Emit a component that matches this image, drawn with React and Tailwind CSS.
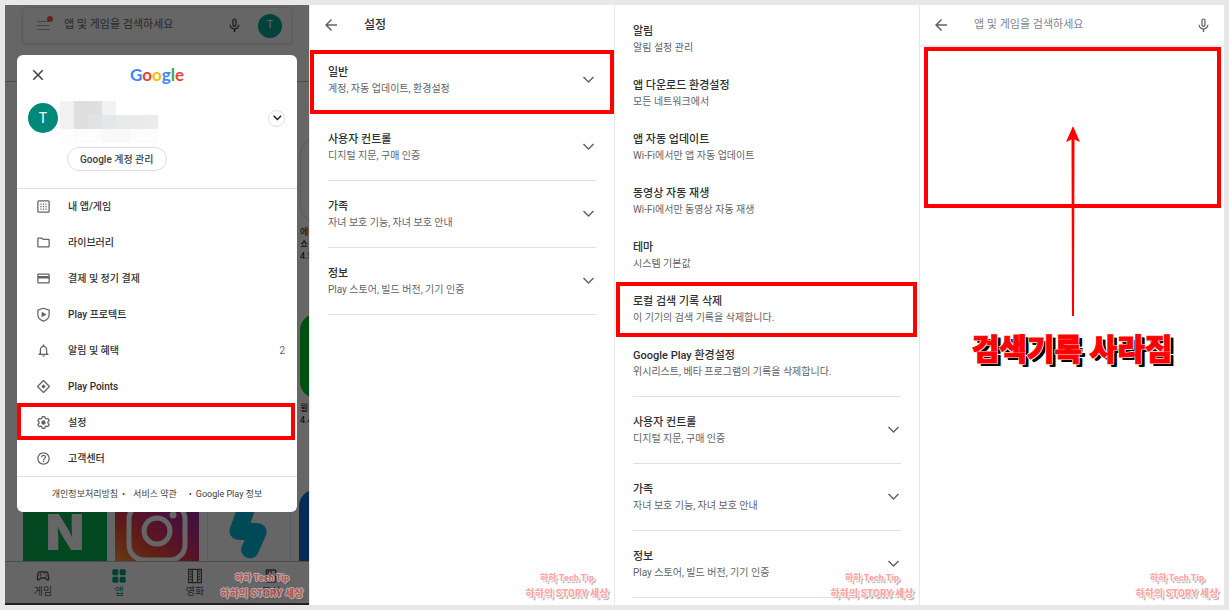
import {
  MdArrowBack, MdClose, MdHelpOutline, MdMicNone, MdNotificationsNone,
  MdOutlineBook, MdOutlineCreditCard, MdOutlineFolder, MdOutlineSportsEsports
} from 'react-icons/md';

function AppsIcon({ className }) {
  return (
    <svg viewBox="0 0 24 24" fill="none" stroke="currentColor" className={className}>
      <rect x="3" y="3" width="18" height="18" rx="1.5" strokeWidth="2" />
      <path d="M7 8h10M7 12h10M7 16h10" strokeWidth="2" strokeDasharray="2 2" />
    </svg>
  );
}

function ShieldPlayIcon({ className }) {
  return (
    <svg viewBox="0 0 24 24" fill="none" stroke="currentColor" strokeWidth="2" className={className}>
      <path d="M12 2 3 5v7c0 5 4 9 9 10.500C17 21 21 17 21 12V5z" strokeLinejoin="round" />
      <path d="M9 7.500v9l8-4.500z" fill="currentColor" stroke="none" />
    </svg>
  );
}

function PointsIcon({ className }) {
  return (
    <svg viewBox="0 0 24 24" fill="none" stroke="currentColor" strokeWidth="2" className={className}>
      <path d="M12 2.500 21.500 12 12 21.500 2.500 12z" strokeLinejoin="round" />
      <path d="M12 8.500 15.500 12 12 15.500 8.500 12z" fill="currentColor" stroke="none" />
    </svg>
  );
}

function GearIcon({ className }) {
  return (
    <svg viewBox="0 0 24 24" fill="none" stroke="currentColor" strokeWidth="2" strokeLinejoin="round" className={className}>
      <path d="M10 2.500h4l.6 2.700 1.900 1.100 2.600-.8 2 3.500-2 1.900v2.200l2 1.900-2 3.500-2.600-.8-1.900 1.100-.6 2.700h-4l-.6-2.700-1.900-1.100-2.600.8-2-3.500 2-1.900v-2.200l-2-1.900 2-3.500 2.600.8 1.900-1.100z" />
      <circle cx="12" cy="12" r="3.500" fill="currentColor" stroke="none" />
    </svg>
  );
}

function FilmIcon({ className }) {
  return (
    <svg viewBox="0 0 24 24" fill="none" stroke="currentColor" strokeWidth="2" className={className}>
      <path d="M2.500 2h19v20h-19zM8 2v20M16 2v20" />
      <path d="M5.500 4v16M18.500 4v16" strokeDasharray="2 2" />
    </svg>
  );
}

function TilesIcon({ className }) {
  return (
    <svg viewBox="0 0 24 24" fill="currentColor" className={className}>
      <rect x="2" y="2" width="9" height="9" rx="2" />
      <rect x="13" y="2" width="9" height="9" rx="2" />
      <rect x="2" y="13" width="9" height="9" rx="2" />
      <rect x="13" y="13" width="9" height="9" rx="2" />
    </svg>
  );
}

function Chevron({ className }) {
  return (
    <svg viewBox="0 0 16 16" fill="none" stroke="currentColor" strokeWidth="1.5" className={className}>
      <path d="m3.500 5 5 5 5-5" />
    </svg>
  );
}

const menu = [
  { label: '내 앱/게임', Icon: AppsIcon },
  { label: '라이브러리', Icon: MdOutlineFolder },
  { label: '결제 및 정기 결제', Icon: MdOutlineCreditCard },
  { label: 'Play 프로텍트', Icon: ShieldPlayIcon },
  { label: '알림 및 혜택', Icon: MdNotificationsNone, count: 2 },
  { label: 'Play Points', Icon: PointsIcon },
  { label: '설정', Icon: GearIcon, marked: true },
  { label: '고객센터', Icon: MdHelpOutline },
];

const tabs = [
  { label: '게임', Icon: MdOutlineSportsEsports },
  { label: '앱', Icon: TilesIcon, active: true },
  { label: '영화', Icon: FilmIcon },
  { label: '도서', Icon: MdOutlineBook },
];

const sections = [
  { title: '사용자 컨트롤', desc: '디지털 지문, 구매 인증' },
  { title: '가족', desc: '자녀 보호 기능, 자녀 보호 안내' },
  { title: '정보', desc: 'Play 스토어, 빌드 버전, 기기 인증' },
];

const general = [
  { title: '알림', desc: '알림 설정 관리' },
  { title: '앱 다운로드 환경설정', desc: '모든 네트워크에서' },
  { title: '앱 자동 업데이트', desc: 'Wi-Fi에서만 앱 자동 업데이트' },
  { title: '동영상 자동 재생', desc: 'Wi-Fi에서만 동영상 자동 재생' },
  { title: '테마', desc: '시스템 기본값' },
  { title: '로컬 검색 기록 삭제', desc: '이 기기의 검색 기록을 삭제합니다.', marked: true },
];

// censored name and e-mail
const mosaic = [
  'bg-[#f1f1f1]', 'bg-[#dedede]', 'bg-[#dfdfdf]', 'bg-[#f1f2f4]', 'bg-white', 'bg-white', 'bg-white',
  'bg-[#f1f1f1]', 'bg-[#dfdfe0]', 'bg-[#e2e2e3]', 'bg-[#e4e6e7]', 'bg-[#e7eaeb]', 'bg-[#e9e9ea]', 'bg-[#ebebeb]',
  'bg-[#fdfdfd]', 'bg-[#fcfcfc]', 'bg-[#fcfcfc]', 'bg-[#f9f9f9]', 'bg-[#f9f9f9]', 'bg-[#fcfcfc]', 'bg-[#fcfcfc]',
];

function Watermark() {
  return (
    <div className="pointer-events-none absolute right-1 bottom-1 w-[86px] text-center leading-[15px] font-black whitespace-nowrap text-[#ff4d4d] opacity-50 [text-shadow:1px_0_#fff,-1px_0_#fff,0_1px_#fff,0_-1px_#fff,2px_2px_1px_#555]">
      <p className="text-[9px] leading-[15px]">하하 Tech Tip</p>
      <p className="text-[10px] leading-[15px]">하하의 STORY 세상</p>
    </div>
  );
}

function Panel({ children }) {
  return (
    <section className="relative flex flex-col overflow-hidden bg-white">
      {children}
      <Watermark />
    </section>
  );
}

function RowText({ title, desc }) {
  return (
    <span className="block text-left">
      <span className="block text-[11px] leading-[17px] font-medium text-[#2d2e31]">{title}</span>
      <span className="block text-[10px] leading-4 text-[#5f6368]">{desc}</span>
    </span>
  );
}

function SectionRow({ title, desc, marked }) {
  return (
    <li className="relative h-[67px] border-b border-[#e0e0e0]">
      <button className="flex h-full w-full items-center justify-between">
        <RowText title={title} desc={desc} />
        <Chevron className="size-4 text-[#5f6368]" />
      </button>
      {marked && <div className="absolute -inset-x-[18px] top-[3px] -bottom-px border-4 border-[#f00]" />}
    </li>
  );
}

function Tile({ className, children, name, sub, rating }) {
  return (
    <div className="w-[84px] shrink-0">
      <div className={`flex h-[84px] items-center justify-center overflow-hidden ${className}`}>{children}</div>
      {name && (
        <div className="pt-1 text-[9px] leading-3 text-black">
          <p>{name}</p>
          <p>{sub}</p>
          <p>{rating}</p>
        </div>
      )}
    </div>
  );
}

function StorePanel() {
  return (
    <Panel>
      <div className="mx-[17px] mt-[2px] flex h-[37px] items-center rounded border border-[#e8e8e8] px-[13px] shadow-sm">
        <button aria-label="메뉴" className="relative">
          <svg viewBox="0 0 16 12" stroke="#aaa" className="h-3 w-4"><path d="M1 1.500h13M1 5.500h13M1 9.500h13" /></svg>
          <span className="absolute -top-1 -right-px size-[6px] rounded-full bg-[#ff5050]" />
        </button>
        <input type="text" aria-label="앱 및 게임 검색" placeholder="앱 및 게임을 검색하세요" className="ml-3 min-w-0 flex-1 text-[11px] outline-none placeholder:text-[#666]" />
        <button aria-label="음성 검색"><MdMicNone className="size-[17px] text-[#444]" /></button>
        <span className="-mr-1 ml-[15px] flex size-6 items-center justify-center rounded-full bg-[#00a892] text-[11px] text-white">T</span>
      </div>
      <div className="mt-[37px] border-b border-[#bbb]" />

      {/* App tiles */}
      <div className="min-h-0 flex-1 basis-0 overflow-hidden pt-14">
        <div className="-mr-[75px] flex h-44 justify-end">
          <Tile className="rounded-2xl border border-[#ddd]" name="에버" sub="쇼핑" rating="4.5" />
        </div>
        <div className="-mr-[75px] flex h-44 justify-end">
          <Tile className="rounded-2xl bg-[#00c72b]" name="윌라" rating="4.4" />
        </div>
        <div className="flex gap-2 pl-[18px]">
          <Tile className="rounded bg-[#03b14f] font-['Inter'] text-[50px] font-black text-white">N</Tile>
          <Tile className="rounded bg-[linear-gradient(215deg,#8a2ab8_10%,#d62b70_45%,#f04a3a_65%,#fdb32c_100%)]">
            <svg viewBox="0 0 84 84" fill="none" stroke="#fff" strokeWidth="5" className="size-full">
              <rect x="14" y="14" width="56" height="56" rx="15" />
              <circle cx="42" cy="41" r="13" />
              <circle cx="58" cy="25" r="3.500" fill="#fff" stroke="none" />
            </svg>
          </Tile>
          <Tile className="rounded border border-[#e5e5e5]">
            <svg viewBox="0 0 84 84" fill="none" stroke="#00b8dc" strokeWidth="18" strokeLinecap="round" strokeLinejoin="round" className="size-full">
              <path d="M40 16 31 41 51 42 43 60" />
            </svg>
          </Tile>
          <Tile className="rounded-2xl bg-[#0b6fd6]" />
        </div>
      </div>

      <nav className="grid h-11 grid-cols-4 border-t border-b-2 border-t-[#bbb] border-b-[#555]">
        {tabs.map(({ label, Icon, active }) => (
          <button key={label} className={active ? 'flex flex-col items-center pt-[6px] text-[#00a070]' : 'flex flex-col items-center pt-[6px] text-[#555]'}>
            <Icon className="size-4" />
            <span className="text-[10px] leading-4">{label}</span>
          </button>
        ))}
      </nav>
      <div className="absolute inset-0 bg-black/60" />

      {/* Account dialog */}
      <div role="dialog" aria-label="계정" className="absolute inset-x-3 top-[50px] rounded-md bg-white">
        <div className="grid h-10 grid-cols-3 items-center px-3">
          <button aria-label="닫기"><MdClose className="size-[18px] text-[#3c4043]" /></button>
          <p className="text-center font-['Lato'] text-[17px] leading-6 font-bold">
            <span className="text-[#4285f4]">G</span>
            <span className="text-[#ea4335]">o</span>
            <span className="text-[#fbbc05]">o</span>
            <span className="text-[#4285f4]">g</span>
            <span className="text-[#34a853]">l</span>
            <span className="text-[#ea4335]">e</span>
          </p>
        </div>
        <div className="border-b border-[#e0e0e0] pb-[17px]">
          <div className="flex h-[46px] items-center px-3">
            <span className="-ml-px flex size-[30px] items-center justify-center rounded-full bg-[#00897b] text-[14px] text-white">T</span>
            <div className="ml-[2px] grid grid-cols-7 pt-2">
              {mosaic.map((c, i) => <span key={i} className={`size-[14px] ${c}`} />)}
            </div>
            <button aria-label="계정 전환" className="ml-auto flex size-[17px] items-center justify-center rounded-full border border-[#dadce0]">
              <Chevron className="size-3 stroke-2 text-[#202124]" />
            </button>
          </div>
          <button className="mt-[6px] ml-[50px] block h-6 rounded-full border border-[#dadce0] px-3 text-[10px] font-medium text-[#3c4043]">Google 계정 관리</button>
        </div>
        <ul className="-mt-px">
          {menu.map(({ label, Icon, count, marked }) => (
            <li key={label} className="relative">
              <button className="flex h-9 w-full items-center pr-3 pl-[19px] text-[10px] font-medium text-[#2d2e31]">
                <Icon className="size-[15px] text-[#5f6368]" />
                <span className="ml-[17px]">{label}</span>
                {count && <span className="ml-auto font-normal text-[#5f6368]">{count}</span>}
              </button>
              {marked && <div className="absolute -top-px bottom-0 left-0 right-[2px] border-4 border-[#f00]" />}
            </li>
          ))}
        </ul>
        <div className="flex h-9 items-center justify-center gap-1 border-t border-[#e0e0e0] text-[9px] text-[#3c4043]">
          <a href="#privacy">개인정보처리방침</a>
          <span>•</span>
          <a href="#terms" className="mx-1">서비스 약관</a>
          <span className="ml-1">•</span>
          <a href="#about">Google Play 정보</a>
        </div>
      </div>
    </Panel>
  );
}

function SettingsPanel() {
  return (
    <Panel>
      <header className="flex h-[42px] items-center px-3 pb-[2px]">
        <button aria-label="뒤로"><MdArrowBack className="size-[18px] text-[#5f6368]" /></button>
        <h1 className="ml-6 text-[12px] font-medium text-[#2d2e31]">설정</h1>
      </header>
      <ul className="px-[18px]">
        <SectionRow title="일반" desc="계정, 자동 업데이트, 환경설정" marked />
        {sections.map(s => <SectionRow key={s.title} {...s} />)}
      </ul>
    </Panel>
  );
}

function GeneralPanel() {
  return (
    <Panel>
      <ul className="px-[18px] pt-[18px]">
        {general.map(({ title, desc, marked }) => (
          <li key={title} className="relative h-[54px]">
            <button className="block w-full"><RowText title={title} desc={desc} /></button>
            {marked && <div className="absolute -top-[11px] -right-4 -left-[17px] h-[55px] border-4 border-[#f00]" />}
          </li>
        ))}
        <li className="h-[50px] border-b border-[#e0e0e0]">
          <button className="block w-full">
            <RowText title="Google Play 환경설정" desc="위시리스트, 베타 프로그램의 기록을 삭제합니다." />
          </button>
        </li>
        {sections.map(s => <SectionRow key={s.title} {...s} />)}
      </ul>
    </Panel>
  );
}

function SearchPanel() {
  return (
    <Panel>
      <header className="flex h-[42px] items-center border-b-2 border-[#ebebeb] px-3">
        <button aria-label="뒤로"><MdArrowBack className="size-[18px] text-[#5f6368]" /></button>
        <input type="text" aria-label="검색" placeholder="앱 및 게임을 검색하세요" className="ml-6 min-w-0 flex-1 pt-px text-[11px] outline-none placeholder:text-[#80868b]" />
        <button aria-label="음성 검색"><MdMicNone className="size-[17px] text-[#5f6368]" /></button>
      </header>
      <div className="relative mr-[3px] ml-1 h-[161px] border-4 border-[#f00]">
        <svg viewBox="0 0 16 190" fill="#f00" className="absolute top-[75px] left-1/2 h-[190px] w-4 -translate-x-1/2">
          <path d="M8 0 15 16 9.500 13.500 9 190H7L6.500 13.500 1 16z" />
        </svg>
      </div>
      <p className="mt-[122px] text-center text-[30px] leading-10 font-black whitespace-nowrap text-[#f00] [-webkit-text-stroke:1px_#f00] [text-shadow:1px_1px_#fff,-1px_-1px_#fff,1px_-1px_#fff,-1px_1px_#fff,3px_3px_#000,4px_3px_#000]">
        검색기록 사라짐
      </p>
    </Panel>
  );
}

export default function App() {
  return (
    <main className="grid min-h-screen grid-cols-4 gap-px bg-[#e8e8e8] p-[5px] font-['Roboto','Noto_Sans_CJK_KR',sans-serif]">
      <StorePanel />
      <SettingsPanel />
      <GeneralPanel />
      <SearchPanel />
    </main>
  );
}
